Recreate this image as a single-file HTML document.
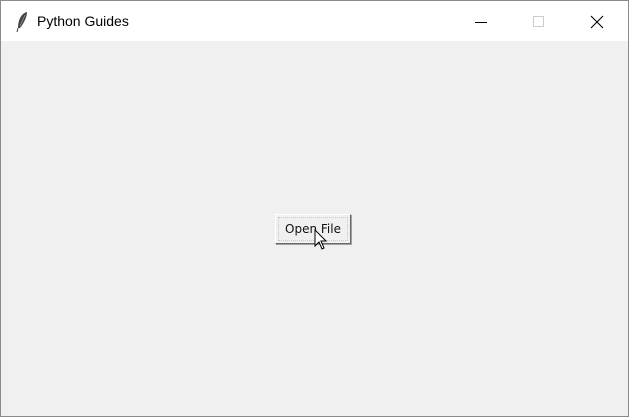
<!DOCTYPE html><html><head><style>
body{margin:0;width:629px;height:417px;overflow:hidden;font-family:"Liberation Sans",sans-serif}
.win{position:absolute;left:0;top:0;width:627px;height:415px;border:1px solid #8a8a8a;background:#f0f0f0}
.tb{position:absolute;left:0;top:0;width:627px;height:40px;background:#fff}
.t{position:absolute;left:36px;top:12px;font-size:14px;color:#000}
.btn{position:absolute;left:274px;top:213px;width:76px;height:30px;box-sizing:border-box;background:#f0f0f0;border:1px solid #fff;border-right-color:#696969;border-bottom-color:#696969;box-shadow:1px 1px 0 #a0a0a0;font-family:"DejaVu Sans",sans-serif;font-size:12px;text-align:center;line-height:28px;color:#111}
.in{position:absolute;left:2px;top:2px;right:2px;bottom:2px;border:1px dotted #c8c8c8}
</style></head><body><div class="win"><div class="tb">
<svg style="position:absolute;left:14px;top:10px" width="14" height="22"><path d="M12 1 C7 2 3 8 3 17 L5 17 C9 12 12 6 12 1Z" fill="#444"/><path d="M10 4 L5 15" stroke="#999" stroke-width="0.8"/><path d="M3 17 L2 21" stroke="#444"/></svg>
<div class="t">Python Guides</div>
<svg style="position:absolute;left:470px;top:13px" width="140" height="16"><path d="M4 8.5H16" stroke="#000"/><path d="M62.5 2.5h10v10h-10z" fill="none" stroke="#ccc"/><path d="M120 2L132 14M132 2L120 14" stroke="#000" stroke-width="1.1"/></svg>
</div>
<div class="btn"><div class="in"></div>Open File</div>
<svg style="position:absolute;left:313px;top:228px" width="14" height="22"><path d="M1 1V17L5 13L8 20L10 19L7 12H12Z" fill="#fff" stroke="#000"/></svg>
</div></body></html>
